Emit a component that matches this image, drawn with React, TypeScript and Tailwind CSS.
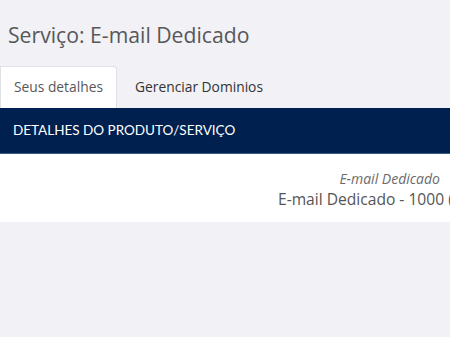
export default function App() {
  return (
    <div className="w-[450px] h-[337px] overflow-hidden bg-[#f1f1f6] font-['Open_Sans',sans-serif]">
      <h1 className="pt-[20px] pl-[8px] text-[21.2px] leading-[30px] text-[#58585a]">Serviço: E-mail Dedicado</h1>

      <div className="mt-[16px] flex items-end h-[42px]">
        <div className="w-[117px] h-[42px] bg-white border border-b-0 border-[#dfe1e6] rounded-tr-[4px] flex items-center justify-center text-[13.8px] text-[#58585a]">
          Seus detalhes
        </div>
        <div className="h-[42px] flex items-center pl-[18px] text-[13.8px] text-[#333]">Gerenciar Dominios</div>
      </div>

      <div className="h-[46px] bg-[#00214f] border-b border-[#3a5a8a] flex items-center pl-[13px] text-[13.5px] text-white font-['Lato',sans-serif]">
        DETALHES DO PRODUTO/SERVIÇO
      </div>

      <div className="h-[68px] bg-white pt-[15px] overflow-hidden">
        <div className="w-[440px] text-right italic text-[14px] leading-[19px] text-[#6b6b6b]">E-mail Dedicado</div>
        <div className="pl-[278px] whitespace-nowrap text-[15.6px] leading-[22px] text-[#555]">E-mail Dedicado - 1000 (contas)</div>
      </div>
    </div>
  )
}
